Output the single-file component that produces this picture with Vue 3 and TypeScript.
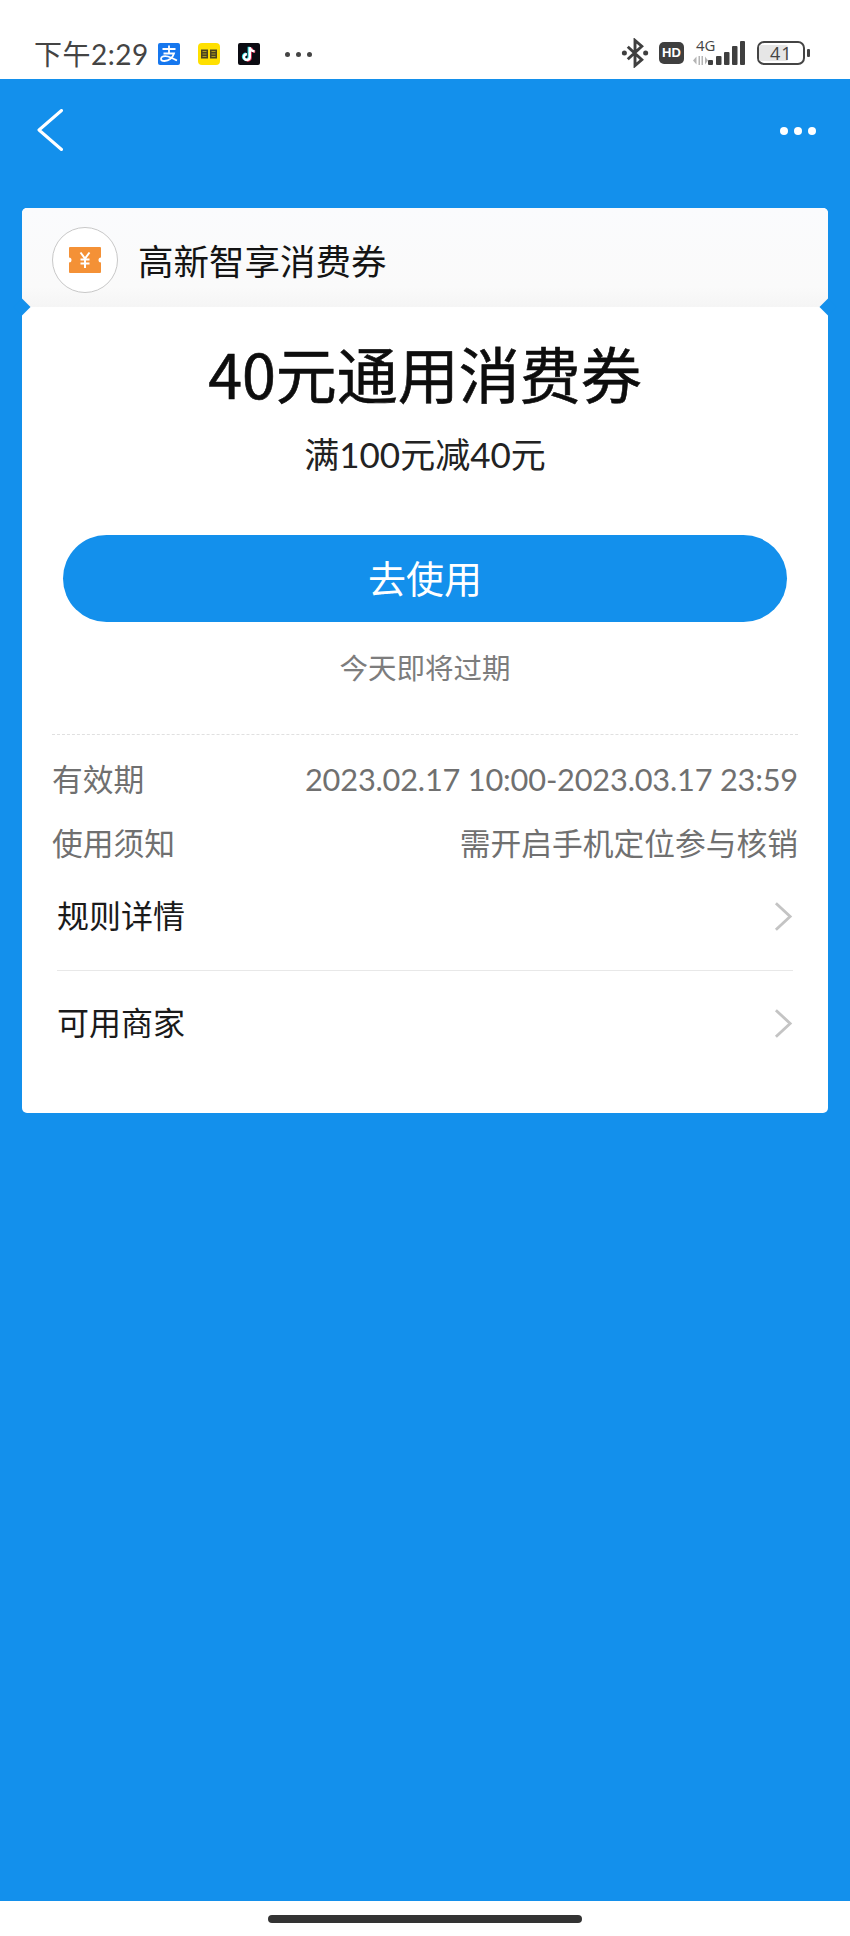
<script setup lang="ts">
const rows = [
  { label: '有效期', value: '2023.02.17 10:00-2023.03.17 23:59' },
  { label: '使用须知', value: '需开启手机定位参与核销' },
]
const links = ['规则详情', '可用商家']
</script>

<template>
  <div class="page">
    <header class="status">
      <div class="status-left">
        <span class="time">下午2:29</span>
        <svg class="app" viewBox="0 0 22 22"><rect width="22" height="22" rx="2" fill="#1677ee"/><path d="M4.500 6h13M11 2.500V10M5.500 10.500h10.500c-1.200 4-5 7.500-9.500 7.500-2 0-3.500-.8-3.500-2.300 0-2.200 3.500-3.200 7-2.200 3.500 1 6 2.700 9 4" fill="none" stroke="#fff" stroke-width="1.800"/></svg>
        <svg class="app" viewBox="0 0 22 22"><rect width="22" height="22" rx="4" fill="#ffe000"/><rect x="3" y="6.500" width="7" height="9" fill="#4a4420"/><rect x="12" y="6.500" width="7" height="9" fill="#4a4420"/><path d="M4.500 8.500h4M4.500 11h4M4.500 13.500h4M13.500 8.500h4M13.500 11h4M13.500 13.500h4" stroke="#c9b21a" stroke-width=".8"/></svg>
        <svg class="app" viewBox="0 0 22 22"><rect width="22" height="22" rx="2" fill="#0b0b12"/><path d="M10.800 3.800v9.900a2.900 2.900 0 1 1-2.900-2.900" fill="none" stroke="#27e0e8" stroke-width="2.400"/><path d="M12.600 4.800v9.900a2.900 2.900 0 0 1-3.400 2.900M13 4.800c.4 2.500 2 3.800 4.200 4" fill="none" stroke="#f0335c" stroke-width="2.400"/><path d="M11.800 4.200v9.900a2.900 2.900 0 1 1-2.900-2.900M11.800 4.200c.4 2.500 2 3.800 4.700 4" fill="none" stroke="#fff" stroke-width="2.400"/></svg>
        <span class="more-dots"><i></i><i></i><i></i></span>
      </div>
      <div class="status-right">
        <svg class="bt" viewBox="0 0 30 30"><path d="M7 8.500l14.500 13.500-7 6V2l7 6L7 21.500" fill="none" stroke="#3f3f3f" stroke-width="3"/><circle cx="3.500" cy="15" r="2.600" fill="#3f3f3f"/><circle cx="25.500" cy="15" r="2.600" fill="#3f3f3f"/></svg>
        <span class="hd">HD</span>
        <span class="signal">
          <span class="net">4G</span>
          <svg class="bars" viewBox="0 0 52 26"><path d="M3.500 16.500L0 20.500l3.500 4zM5.500 16h1.500v9H5.500zM8.500 16H10v9H8.500zM12 16.500l0 8 3-4z" fill="#b4b4b4"/><rect x="15" y="20" width="5" height="5" rx="1" fill="#3f3f3f"/><rect x="23" y="16" width="5.500" height="9" rx="1" fill="#3f3f3f"/><rect x="31" y="12" width="5.500" height="13" rx="1" fill="#3f3f3f"/><rect x="39" y="6" width="5.500" height="19" rx="1" fill="#3f3f3f"/><rect x="47" y="1" width="5" height="24" rx="1" fill="#3f3f3f"/></svg>
        </span>
        <span class="battery"><span class="level"></span><span class="pct">41</span></span>
        <span class="nub"></span>
      </div>
    </header>

    <main class="body">
      <nav class="nav">
        <svg class="back" viewBox="0 0 26 42"><path d="M24.500 1.500L2 21l22.500 19.500" fill="none" stroke="#fff" stroke-width="3" stroke-linecap="round" stroke-linejoin="round"/></svg>
        <span class="nav-dots"><i></i><i></i><i></i></span>
      </nav>

      <section class="card">
        <div class="brand">
          <span class="logo">
            <svg viewBox="0 0 32 26"><path d="M1 0h30a1 1 0 0 1 1 1v9.500a2.500 2.500 0 0 0 0 5V25a1 1 0 0 1-1 1H1a1 1 0 0 1-1-1v-9.500a2.500 2.500 0 0 0 0-5V1a1 1 0 0 1 1-1z" fill="#f49136"/><path d="M11.500 5.500l4.500 6 4.500-6M16 11.500v9.500M11.500 12.500h9M11.500 16.500h9" fill="none" stroke="#fff" stroke-width="2"/></svg>
          </span>
          <span class="brand-name">高新智享消费券</span>
        </div>

        <div class="content">
          <h1 class="title">40元通用消费券</h1>
          <p class="sub">满100元减40元</p>
          <button class="use" type="button"><span class="use-label">去使用</span></button>
          <p class="expire">今天即将过期</p>

          <div class="info">
            <div v-for="row in rows" :key="row.label" class="info-row">
              <span>{{ row.label }}</span>
              <span class="info-value">{{ row.value }}</span>
            </div>
          </div>

          <ul class="links">
            <li v-for="link in links" :key="link" class="link">
              <span class="link-label">{{ link }}</span>
              <svg viewBox="0 0 20 32"><path d="M2 2l15 14L2 30" fill="none" stroke="#c4c4c4" stroke-width="3"/></svg>
            </li>
          </ul>
        </div>
      </section>
    </main>

    <footer class="home"><span class="home-bar"></span></footer>
  </div>
</template>

<style>
html, body { margin: 0; background: #fff; }
</style>

<style scoped>
.page {
  width: 850px;
  height: 1936px;
  display: flex;
  flex-direction: column;
  background: #fff;
  font-family: "Noto Sans CJK SC", "Noto Sans", sans-serif;
  overflow: hidden;
}
.status {
  height: 79px;
  flex: none;
  box-sizing: border-box;
  padding: 0 40px 0 34px;
  display: flex;
  justify-content: space-between;
  align-items: flex-start;
}
.status-left {
  display: flex;
  align-items: center;
  height: 28px;
  margin-top: 40px;
}
.time {
  font-size: 28px;
  line-height: 28px;
  color: #444;
  width: 124px;
  white-space: nowrap;
  font-family: Lato, "Noto Sans CJK SC", sans-serif;
  font-weight: 400;
  letter-spacing: 0.5px;
}
.app { width: 22px; height: 22px; margin-right: 18px; flex: none; }
.more-dots { display: flex; gap: 6px; margin-left: 7px; }
.more-dots i { width: 5px; height: 5px; border-radius: 50%; background: #444; }
.status-right {
  display: flex;
  align-items: center;
  margin-top: 38px;
  height: 30px;
}
.bt { width: 29px; height: 30px; }
.hd {
  margin-left: 9px;
  width: 25px;
  height: 22px;
  border-radius: 5px;
  background: #3f3f3f;
  color: #fff;
  font: 700 13px/22px "Liberation Sans", sans-serif;
  text-align: center;
}
.signal { position: relative; width: 52px; height: 26px; margin-left: 9px; }
.net {
  position: absolute;
  left: 3px;
  top: -2px;
  font: 400 15px/15px "Open Sans", sans-serif;
  color: #444;
}
.bars { position: absolute; left: 0; top: 0; width: 52px; height: 26px; }
.battery {
  margin-left: 12px;
  position: relative;
  box-sizing: border-box;
  width: 48px;
  height: 24px;
  border: 2px solid #444;
  border-radius: 7px;
  display: flex;
  align-items: center;
}
.level { position: absolute; left: 0; top: 2px; bottom: 2px; width: 29px; border-radius: 2px; background: #e6e6e6; }
.pct { position: relative; margin-left: 11px; font: 400 18px/20px "Open Sans", sans-serif; color: #444; letter-spacing: 1px; }
.nub { width: 3px; height: 8px; margin-left: 2px; background: #444; border-radius: 1px; }

.body {
  flex: 1;
  background: #1390ec;
  box-sizing: border-box;
  padding: 0 22px;
}
.nav {
  height: 129px;
  display: flex;
  justify-content: space-between;
  align-items: flex-start;
}
.back { width: 26px; height: 42px; margin-top: 30px; margin-left: 15px; }
.nav-dots { display: flex; gap: 6px; margin-top: 48px; margin-right: 12px; }
.nav-dots i { width: 8px; height: 8px; border-radius: 50%; background: #fff; }

.card {
  width: 806px;
  height: 905px;
  border-radius: 5px;
  background: #fff;
  position: relative;
  display: flex;
  flex-direction: column;
  box-sizing: border-box;
}
.brand {
  height: 99px;
  flex: none;
  background: linear-gradient(#fafbfd, #fafafa 80%, #f5f5f5);
  border-radius: 5px 5px 0 0;
  box-sizing: border-box;
  padding: 19px 30px 0;
  display: flex;
  align-items: flex-start;
  position: relative;
}
.brand::before, .brand::after {
  content: "";
  position: absolute;
  bottom: -6px;
  width: 12px;
  height: 12px;
  background: #1390ec;
  transform: rotate(45deg);
}
.brand::before { left: -6px; }
.brand::after { right: -6px; }
.logo {
  width: 64px;
  height: 64px;
  border: 1px solid #c8c8c8;
  border-radius: 50%;
  background: #fff;
  display: flex;
  align-items: center;
  justify-content: center;
  flex: none;
}
.logo svg { width: 32px; height: 26px; }
.brand-name {
  margin-left: 20px;
  font-size: 35.500px;
  line-height: 66px;
  color: #141414;
  white-space: nowrap;
}
.content {
  flex: 1;
  display: flex;
  flex-direction: column;
  box-sizing: border-box;
  padding: 0 30px;
  min-height: 0;
}
.title {
  margin: 24px 0 0;
  font-size: 61px;
  line-height: 84px;
  font-weight: 400;
  -webkit-text-stroke: 0.6px #0d0d0d;
  color: #0d0d0d;
  text-align: center;
  white-space: nowrap;
}
.sub {
  margin: 17px 0 0;
  font-family: Lato, "Noto Sans CJK SC", sans-serif;
  font-size: 35px;
  line-height: 44px;
  color: #222;
  text-align: center;
}
.use {
  display: flex;
  align-items: center;
  justify-content: center;
  width: 724px;
  height: 87px;
  margin: 59px 0 0 11px;
  padding: 0 0 4px;
  box-sizing: border-box;
  border: 0;
  border-radius: 44px;
  background: #1390ec;
  color: #fff;
  font: 400 38px/50px "Noto Sans CJK SC", sans-serif;
}
.expire {
  margin: 25px 0 0;
  font-size: 28.500px;
  line-height: 40px;
  color: #7d7d7d;
  text-align: center;
}
.info {
  margin-top: 47px;
  border-top: 1px dashed #e0e0e0;
  padding-top: 22px;
  display: flex;
  flex-direction: column;
  gap: 19px;
}
.info-row {
  display: flex;
  justify-content: space-between;
  font-family: Lato, "Noto Sans CJK SC", sans-serif;
  font-size: 30.750px;
  line-height: 45px;
  color: #707070;
  white-space: nowrap;
}
.info-row:first-child .info-value { letter-spacing: -0.2px; }
.links { list-style: none; margin: -2.500px 5px 0; padding: 0; }
.link {
  height: 106px;
  display: flex;
  align-items: center;
  justify-content: space-between;
  font-size: 32px;
  color: #1a1a1a;
  box-sizing: border-box;
}
.link-label { margin-bottom: 5px; }
.link + .link { border-top: 1px solid #e8e8e8; }
.link svg { width: 19px; height: 31px; }

.home {
  height: 35px;
  flex: none;
  background: #fff;
  display: flex;
  justify-content: center;
  padding-top: 14px;
  box-sizing: border-box;
}
.home-bar { width: 314px; height: 8px; border-radius: 4px; background: #333; }
</style>
